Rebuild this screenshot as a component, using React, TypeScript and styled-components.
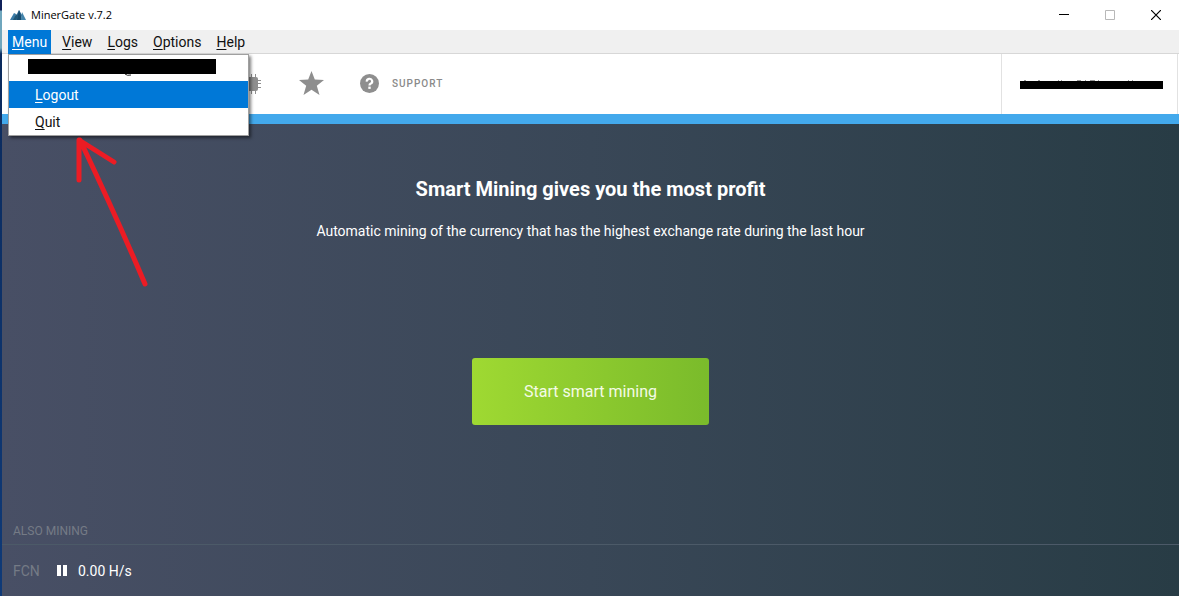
import React from "react";
import styled, { createGlobalStyle } from "styled-components";

const GlobalStyle = createGlobalStyle`
  *, *::before, *::after { box-sizing: border-box; }
  body { margin: 0; font-family: Roboto, "Liberation Sans", sans-serif; color: #111; }
  button { font: inherit; border: 0; padding: 0; background: none; color: inherit; }
`;

const Desktop = styled.div`
  min-height: 100vh;
  display: flex;
  padding-left: 2px;
  background: linear-gradient(to bottom, #10215a 0, #10215a 10px, #6fa6bd 11px, #6fa6bd 48px, #0b2a5c 54px, #0f3a78 100%);
`;

const AppWindow = styled.div`
  position: relative;
  flex: 1;
  min-width: 0;
  display: flex;
  flex-direction: column;
  background: #fff;
`;

const TitleBar = styled.header`
  height: 30px;
  display: flex;
  align-items: center;
  padding-left: 8px;
  background: #fff;
`;

const AppTitle = styled.h1`
  flex: 1;
  margin: 0 0 0 5px;
  font: 400 11px/16px "Open Sans", "Noto Sans", sans-serif;
  color: #000;
`;

const WindowButton = styled.button`
  width: 46px;
  height: 30px;
  display: grid;
  place-items: center;
  color: ${(p) => (p.disabled ? "#b8b8b8" : "#000")};
`;

const MenuBar = styled.nav`
  position: relative;
  height: 24px;
  display: flex;
  padding-left: 6px;
  background: #f0f0f0;
  border-bottom: 1px solid #d7d7d7;
`;

const MenuTitle = styled.button<{ $open?: boolean }>`
  padding: 0 4px;
  margin-right: 7px;
  font-size: 14px;
  line-height: 24px;
  height: 24px;
  background: ${(p) => (p.$open ? "#0078d7" : "transparent")};
  color: ${(p) => (p.$open ? "#fff" : "#111")};
`;

const Mnemonic = styled.span`
  text-decoration: underline;
  text-underline-offset: 2px;
  text-decoration-thickness: 1px;
`;

const Dropdown = styled.div`
  position: absolute;
  z-index: 2;
  top: 24px;
  left: 6px;
  width: 241px;
  border: 1px solid #a0a0a0;
  background: #fff;
  box-shadow: 2px 2px 3px rgba(0, 0, 0, 0.5);
  display: flex;
  flex-direction: column;
`;

const DropdownItem = styled.button<{ $active?: boolean }>`
  height: 27px;
  padding: 1px 0 0 26px;
  text-align: left;
  font-size: 14px;
  line-height: 26px;
  background: ${(p) => (p.$active ? "#0078d7" : "#fff")};
  color: ${(p) => (p.$active ? "#fff" : "#111")};
`;

const AccountItem = styled.div`
  height: 26px;
  padding: 4px 0 0 19px;
`;

const Redaction = styled.div<{ $width: number; $height: number }>`
  width: ${(p) => p.$width}px;
  height: ${(p) => p.$height}px;
  background: #000;
`;

const Toolbar = styled.div`
  height: 60px;
  display: flex;
  align-items: center;
  padding-left: 236px;
  color: #939393;
`;

const ToolButton = styled.button`
  display: flex;
  align-items: center;
  gap: 12px;
  margin-right: 36px;
  font-size: 10px;
  line-height: 12px;
  font-weight: 500;
  letter-spacing: 1px;
  color: #8a8a8a;
`;

const Account = styled.div`
  align-self: stretch;
  display: flex;
  flex-direction: column;
  justify-content: center;
  width: 177px;
  margin: 0 1px 0 auto;
  padding-left: 18px;
  border: solid #e2e2e2;
  border-width: 0 1px;
`;

const AccentBar = styled.div`
  height: 10px;
  background: #43a9ec;
`;

const Main = styled.main`
  flex: 1;
  display: flex;
  flex-direction: column;
  color: #fff;
  background: linear-gradient(to right, #484f65 0%, #394757 50%, #283c45 100%);
`;

const Promo = styled.section`
  flex: 1;
  display: flex;
  flex-direction: column;
  align-items: center;
  padding-top: 52px;
`;

const Headline = styled.h2`
  margin: 0;
  font-size: 20px;
  line-height: 26px;
  font-weight: 700;
`;

const Description = styled.p`
  margin: 18px 0 116px;
  font-size: 14px;
  line-height: 22px;
`;

const StartButton = styled.button`
  width: 237px;
  height: 67px;
  border-radius: 3px;
  font-size: 16px;
  color: #f4fbe6;
  background: linear-gradient(to right, #9fd932, #7abb2b);
`;

const AlsoMining = styled.h3`
  margin: 0;
  padding: 0 11px 5px;
  font-size: 12px;
  line-height: 16px;
  font-weight: 400;
  color: #757b86;
  border-bottom: 1px solid #4c5a68;
`;

const CoinRow = styled.div`
  height: 51px;
  display: flex;
  align-items: center;
  padding-left: 11px;
  font-size: 14px;
`;

const CoinName = styled.span`
  width: 44px;
  color: #757b86;
`;

const PauseButton = styled.button`
  width: 21px;
  display: flex;
`;

const Arrow = styled.svg`
  position: absolute;
  z-index: 3;
  left: 71px;
  top: 134px;
  pointer-events: none;
`;

const Logo = () => (
  <svg width="16" height="12" viewBox="0 0 16 12" aria-hidden="true">
    <path d="M0 11 4 4l2 1-2 6z" fill="#3a7ca8" />
    <path d="m4 11 5-10 3 5-1 5z" fill="#2a658f" />
    <path d="m9 1 3 10H7z" fill="#174b6d" />
    <path d="m11 11 1-8 4 8z" fill="#4384ab" />
    <path d="M3 11 6 5l2 2-2 4z" fill="#205777" />
  </svg>
);

const Chip = () => (
  <svg width="24" height="24" viewBox="0 0 24 24" aria-hidden="true">
    <rect x="5" y="5" width="15" height="14" rx="2" fill="#8e8e8e" />
    <path
      d="M7.500 2v20M10.500 2v20M13.500 2v20M17.500 2v20M2 8.500h21M2 11.500h21M2 15.500h21"
      stroke="#8e8e8e"
    />
  </svg>
);

const Star = () => (
  <svg width="26" height="26" viewBox="0 0 26 26" aria-hidden="true">
    <path d="m13.500 0 3.300 8.600 9.200.4-7.200 5.800 2.700 9.200-8-5.200L5.500 24l2.700-9.200L1 9l9.200-.4z" fill="#8e8e8e" />
  </svg>
);

const Help = () => (
  <svg width="20" height="20" viewBox="0 0 20 20" aria-hidden="true">
    <circle cx="9.500" cy="9.500" r="9.500" fill="#8e8e8e" />
    <path d="M6.800 7.600A2.700 2.600 0 1 1 10.500 9.800q-1 .5-1 1.600" fill="none" stroke="#fff" strokeWidth="2.200" />
    <rect x="8.300" y="12.600" width="2.400" height="2.300" fill="#fff" />
  </svg>
);

const menus = ["Menu", "View", "Logs", "Options", "Help"];

const Label = ({ text }: { text: string }) => (
  <>
    <Mnemonic>{text[0]}</Mnemonic>
    {text.slice(1)}
  </>
);

export default function App() {
  return (
    <>
      <GlobalStyle />
      <Desktop>
        <AppWindow>
          <TitleBar>
            <Logo />
            <AppTitle>MinerGate v.7.2</AppTitle>
            <WindowButton aria-label="Minimize">
              <svg width="10" height="10"><path d="M0 4.500h10" stroke="currentColor" /></svg>
            </WindowButton>
            <WindowButton aria-label="Maximize" disabled>
              <svg width="10" height="10"><path d="M.5.5h9v9h-9z" fill="none" stroke="currentColor" /></svg>
            </WindowButton>
            <WindowButton aria-label="Close">
              <svg width="10" height="10"><path d="m0 0 10 10m0-10-10 10" stroke="currentColor" strokeWidth="1.200" /></svg>
            </WindowButton>
          </TitleBar>
          <MenuBar aria-label="Application menu">
            {menus.map((name, i) => (
              <MenuTitle key={name} $open={i === 0}>
                <Label text={name} />
              </MenuTitle>
            ))}
            <Dropdown>
              <AccountItem>
                <Redaction $width={188} $height={15} />
                <svg width="188" height="3" display="block" aria-hidden="true">
                  <path d="M97 0q2 2 6 1" fill="none" stroke="#222" />
                </svg>
              </AccountItem>
              <DropdownItem $active><Label text="Logout" /></DropdownItem>
              <DropdownItem><Label text="Quit" /></DropdownItem>
            </Dropdown>
          </MenuBar>
          <Toolbar>
            <ToolButton aria-label="Miner"><Chip /></ToolButton>
            <ToolButton aria-label="Favorites"><Star /></ToolButton>
            <ToolButton><Help />SUPPORT</ToolButton>
            <Account>
              <svg width="143" height="2" display="block" aria-hidden="true">
                <path
                  d="M4 1.500h2M18 1.500h2M38 1.500h1M41 1.500h1M57 1.500h4M65 1.500h1M70 1.500h5M78 1.500h1M108 1.500h1M112 1.500h1"
                  stroke="#999"
                />
              </svg>
              <Redaction $width={143} $height={8} />
            </Account>
          </Toolbar>
          <AccentBar />
          <Main>
            <Promo>
              <Headline>Smart Mining gives you the most profit</Headline>
              <Description>
                Automatic mining of the currency that has the highest exchange rate during the last hour
              </Description>
              <StartButton>Start smart mining</StartButton>
            </Promo>
            <AlsoMining>ALSO MINING</AlsoMining>
            <CoinRow>
              <CoinName>FCN</CoinName>
              <PauseButton aria-label="Pause">
                <svg width="10" height="11"><path d="M0 0h4v11H0zM6 0h4v11H6z" fill="#fff" /></svg>
              </PauseButton>
              <span>0.00 H/s</span>
            </CoinRow>
          </Main>
          <Arrow width="80" height="156" viewBox="0 0 80 156" aria-hidden="true">
            <path
              d="M72 150 Q44 84 7 6M6 46V6L41 28"
              fill="none"
              stroke="#ec1c24"
              strokeWidth="5"
              strokeLinecap="round"
              strokeLinejoin="round"
            />
          </Arrow>
        </AppWindow>
      </Desktop>
    </>
  );
}
